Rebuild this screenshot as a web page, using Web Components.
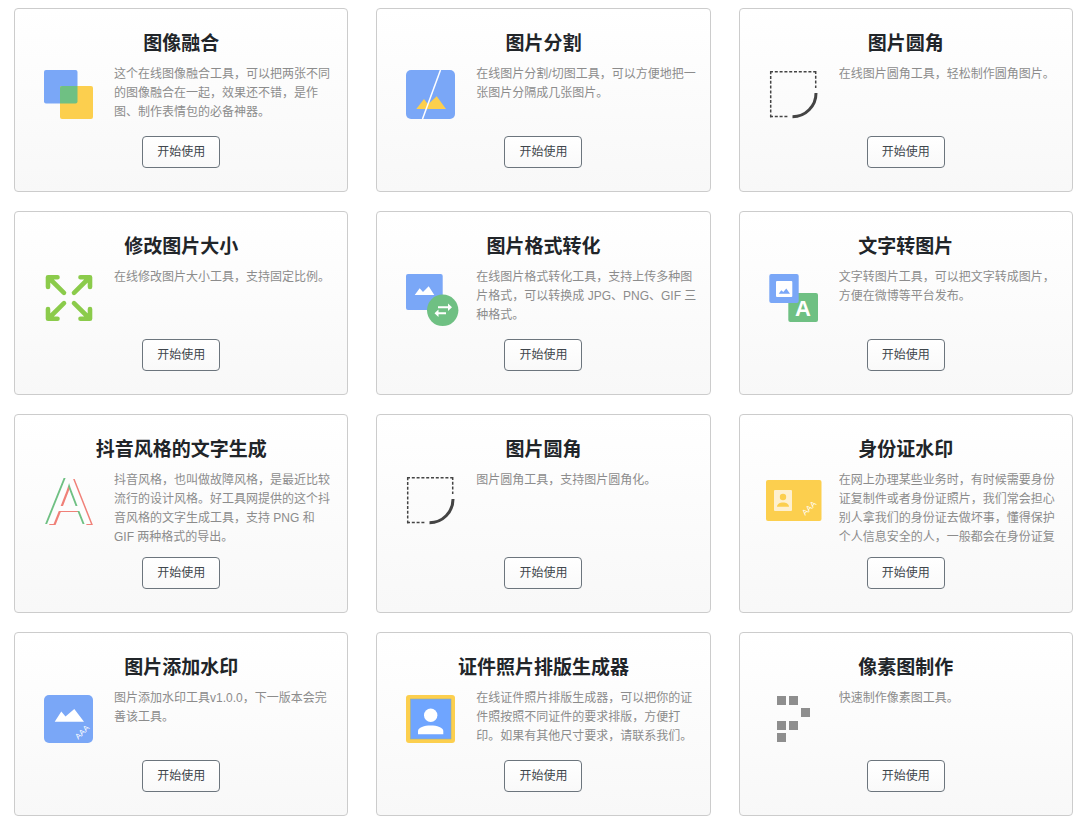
<!DOCTYPE html>
<html lang="zh-CN">
<head>
<meta charset="utf-8">
<meta name="viewport" content="width=device-width, initial-scale=1">
<title>图片工具</title>
<style>
  body {
    margin: 0;
    background: #fff;
    font-family: "Liberation Sans", "Noto Sans CJK SC", sans-serif;
  }
</style>
</head>
<body>

<tool-grid>
  <tool-card icon="blend">
    <span slot="title">图像融合</span>
    这个在线图像融合工具，可以把两张不同的图像融合在一起，效果还不错，是作图、制作表情包的必备神器。
  </tool-card>
  <tool-card icon="split">
    <span slot="title">图片分割</span>
    在线图片分割/切图工具，可以方便地把一张图片分隔成几张图片。
  </tool-card>
  <tool-card icon="corner">
    <span slot="title">图片圆角</span>
    在线图片圆角工具，轻松制作圆角图片。
  </tool-card>
  <tool-card icon="resize">
    <span slot="title">修改图片大小</span>
    在线修改图片大小工具，支持固定比例。
  </tool-card>
  <tool-card icon="convert">
    <span slot="title">图片格式转化</span>
    在线图片格式转化工具，支持上传多种图片格式，可以转换成 JPG、PNG、GIF 三种格式。
  </tool-card>
  <tool-card icon="text">
    <span slot="title">文字转图片</span>
    文字转图片工具，可以把文字转成图片，方便在微博等平台发布。
  </tool-card>
  <tool-card icon="glitch">
    <span slot="title">抖音风格的文字生成</span>
    抖音风格，也叫做故障风格，是最近比较流行的设计风格。好工具网提供的这个抖音风格的文字生成工具，支持 PNG 和 GIF 两种格式的导出。
  </tool-card>
  <tool-card icon="corner">
    <span slot="title">图片圆角</span>
    图片圆角工具，支持图片圆角化。
  </tool-card>
  <tool-card icon="idcard">
    <span slot="title">身份证水印</span>
    在网上办理某些业务时，有时候需要身份证复制件或者身份证照片，我们常会担心别人拿我们的身份证去做坏事，懂得保护个人信息安全的人，一般都会在身份证复
  </tool-card>
  <tool-card icon="watermark">
    <span slot="title">图片添加水印</span>
    图片添加水印工具v1.0.0，下一版本会完善该工具。
  </tool-card>
  <tool-card icon="portrait">
    <span slot="title">证件照片排版生成器</span>
    在线证件照片排版生成器，可以把你的证件照按照不同证件的要求排版，方便打印。如果有其他尺寸要求，请联系我们。
  </tool-card>
  <tool-card icon="pixel">
    <span slot="title">像素图制作</span>
    快速制作像素图工具。
  </tool-card>
</tool-grid>

<script>
  // every icon is drawn on a 56x56 canvas
  const ICONS = {
    blend: `
      <rect x="3" y="3" width="33.5" height="33.5" rx="2" fill="#7aa7f7"/>
      <rect x="19" y="19" width="33" height="33" rx="2" fill="#fccf4e"/>
      <path d="M21 19H36.5V34.5a2 2 0 0 1-2 2H19V21a2 2 0 0 1 2-2Z" fill="#6fc083"/>`,
    split: `
      <rect x="3" y="3" width="49" height="49" rx="5" fill="#7aa7f7"/>
      <path d="M13.3 42 21 32l4 5.5 8.7-8.2L43 42Z" fill="#fccf4e"/>
      <path d="M37.5 3 19.5 52" stroke="#fff" stroke-width="1.5"/>`,
    corner: `
      <g fill="none" stroke="#444">
        <path d="M4.7 50.4V4M4 4.7H50.4M49.7 4V21M4 49.6H22" stroke-width="1.5" stroke-dasharray="3 1.8"/>
        <path d="M50 26A23.5 23.5 0 0 1 26.5 49.7" stroke-width="3"/>
      </g>`,
    resize: `
      <g fill="none" stroke="#8bcb4b" stroke-width="4.6" stroke-linecap="round" stroke-linejoin="round">
        <path d="M16.5 7.2H7V17M7.5 7.5 23 22.8"/>
        <path d="M39.5 7.2H49V17M48.5 7.5 33 22.8"/>
        <path d="M16.5 48.8H7V39M7.5 48.5 23 33.2"/>
        <path d="M39.5 48.8H49V39M48.5 48.5 33 33.2"/>
      </g>`,
    convert: `
      <rect x="3" y="4" width="36.7" height="36" rx="2" fill="#7aa7f7"/>
      <path d="M11.7 25 16.7 18.3 20 22 25.7 16.3 31.3 25Z" fill="#fff"/>
      <circle cx="39.7" cy="40.3" r="15.7" fill="#6fc083"/>
      <path d="M35 37.3H46M34 43.2H43" stroke="#fff" stroke-width="2"/>
      <path d="M45 33.5 49 37.3 45 41ZM35.5 39.5 31.5 43.2 35.5 47Z" fill="#fff"/>`,
    text: `
      <rect x="22.3" y="23" width="29.7" height="29" rx="2" fill="#6fc083"/>
      <rect x="3.3" y="4" width="29.4" height="29" rx="2" fill="#7aa7f7"/>
      <rect x="10" y="11" width="16.3" height="16" rx="1" fill="#fff"/>
      <path d="M12.7 23.7 15.3 20.3 17.3 22 20.3 18.5 24 23.7Z" fill="#7aa7f7"/>
      <text x="37" y="46" text-anchor="middle" font-size="22" font-weight="700" fill="#fff">A</text>`,
    idcard: `
      <rect x="0" y="7" width="55.5" height="41" rx="2" fill="#fccf4e"/>
      <rect x="8" y="17" width="18" height="21" rx="1" fill="#fef0cf"/>
      <circle cx="17" cy="24" r="3.2" fill="#fccf4e"/>
      <path d="M11 33.7C11 28 23 28 23 33.7Z" fill="#fccf4e"/>
      <text x="45" y="37" text-anchor="middle" font-size="8" fill="#fff" transform="rotate(-45 45 37)">AAA</text>`,
    watermark: `
      <rect x="3" y="4" width="49" height="48" rx="5" fill="#7aa7f7"/>
      <path d="M13.7 30.7 20.3 20.5 24.5 25.5 33.3 18 43 30.7Z" fill="#fff"/>
      <text x="43" y="43" text-anchor="middle" font-size="8" fill="#fff" transform="rotate(-45 43 43)">AAA</text>`,
    portrait: `
      <rect x="3" y="4" width="49" height="48" rx="3" fill="#fccf4e"/>
      <rect x="7.5" y="8" width="40.5" height="40" fill="#6fa5ff" stroke="#9aae9c" stroke-width=".6"/>
      <circle cx="27.7" cy="24.3" r="6.7" fill="#fff"/>
      <path d="M15 43.3V40C15 32.5 40.3 32.5 40.3 40V43.3Z" fill="#fff"/>`,
    pixel: `
      <path d="M11 5h9v9h-9ZM23 5h9v9h-9ZM35 17h9v9h-9ZM11 30h9v9h-9ZM23 30h9v9h-9ZM11 42h9v9h-9Z" fill="#8e8e8e"/>`
  };

  class ToolIcon extends HTMLElement {
    constructor() {
      super();
      this.attachShadow({ mode: "open" });
    }

    connectedCallback() {
      const name = this.getAttribute("name");
      this.shadowRoot.innerHTML = `
        <style>
          :host { display: block; width: 56px; height: 56px; }
          svg { display: block; width: 100%; height: 100%; }
          .glitch {
            display: block;
            font-size: 66px;
            line-height: 56px;
            text-align: center;
            color: #fdfdfd;
            text-shadow: -2px 0 #6fc083, 2px 1px #f08078;
          }
        </style>
        ${name === "glitch"
          ? `<span class="glitch">A</span>`
          : `<svg viewBox="0 0 56 56" aria-hidden="true">${ICONS[name]}</svg>`}
      `;
    }
  }

  class ToolCard extends HTMLElement {
    constructor() {
      super();
      this.attachShadow({ mode: "open" });
    }

    connectedCallback() {
      this.shadowRoot.innerHTML = `
        <style>
          :host {
            display: flex;
            flex-direction: column;
            padding: 23px 11px 23px 26px;
            border: 1px solid #ccc;
            border-radius: 4px;
            background: linear-gradient(#fff, #f8f8f8);
          }
          h2 {
            margin: 0 0 9px -15px;
            font-size: 19px;
            line-height: 24px;
            font-weight: 700;
            text-align: center;
            color: #212529;
          }
          .body {
            display: grid;
            grid-template-columns: 56px 1fr;
            gap: 17px;
            min-height: 61px;
            margin-bottom: 10px;
          }
          tool-icon { margin-top: 2px; }
          p {
            margin: 0;
            max-height: 76px;
            overflow: hidden;
            font-size: 12px;
            line-height: 19px;
            color: #8c8c8c;
          }
          .action {
            display: flex;
            justify-content: center;
            margin: auto 0 0 -15px;
          }
          button {
            width: 78px;
            height: 32px;
            padding: 0 0 3px;
            border: 1px solid #6c757d;
            border-radius: 4px;
            background: linear-gradient(#fff, #f9f9f9);
            font: inherit;
            font-size: 12px;
            color: #3f464c;
          }
        </style>
        <h2><slot name="title"></slot></h2>
        <div class="body">
          <tool-icon name="${this.getAttribute("icon")}"></tool-icon>
          <p><slot></slot></p>
        </div>
        <div class="action"><button type="button">开始使用</button></div>
      `;
    }
  }

  class ToolGrid extends HTMLElement {
    constructor() {
      super();
      this.attachShadow({ mode: "open" });
      this.shadowRoot.innerHTML = `
        <style>
          :host {
            display: grid;
            grid-template-columns: repeat(3, 1fr);
            gap: 19px 28px;
            padding: 8px 7px 9px 14px;
          }
        </style>
        <slot></slot>
      `;
    }
  }

  window.customElements.define("tool-icon", ToolIcon);
  window.customElements.define("tool-card", ToolCard);
  window.customElements.define("tool-grid", ToolGrid);
</script>
</body>
</html>
